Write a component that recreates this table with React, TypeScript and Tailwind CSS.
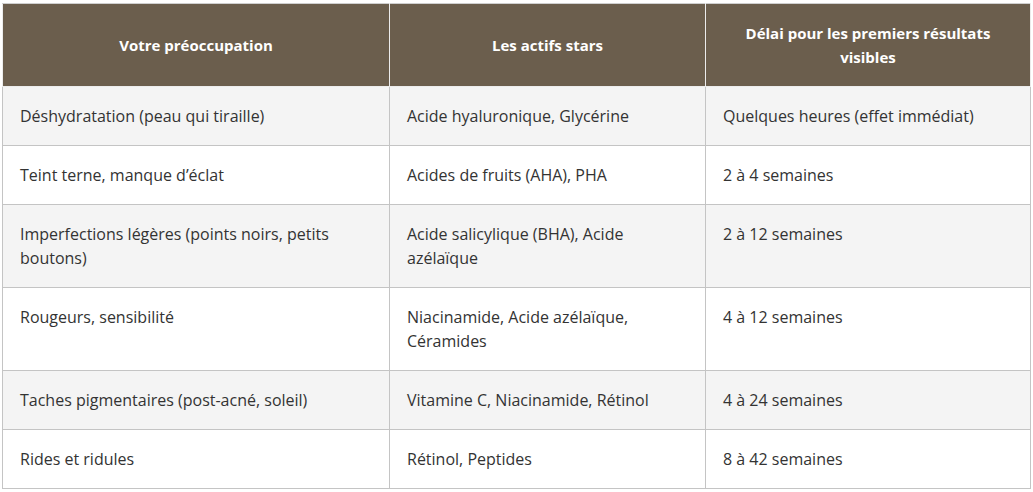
import React from "react";

const rows: [string, string, string][] = [
  ["Déshydratation (peau qui tiraille)", "Acide hyaluronique, Glycérine", "Quelques heures (effet immédiat)"],
  ["Teint terne, manque d’éclat", "Acides de fruits (AHA), PHA", "2 à 4 semaines"],
  ["Imperfections légères (points noirs, petits boutons)", "Acide salicylique (BHA), Acide azélaïque", "2 à 12 semaines"],
  ["Rougeurs, sensibilité", "Niacinamide, Acide azélaïque, Céramides", "4 à 12 semaines"],
  ["Taches pigmentaires (post-acné, soleil)", "Vitamine C, Niacinamide, Rétinol", "4 à 24 semaines"],
  ["Rides et ridules", "Rétinol, Peptides", "8 à 42 semaines"],
];

export default function App() {
  return (
    <div className="bg-white w-[1033px] h-[492px] pl-[2px] pt-[3px] font-['Open_Sans',sans-serif]">
      <table className="w-[1028px] border-collapse table-fixed text-[16px] leading-[24px] text-[#333]">
        <colgroup>
          <col className="w-[387px]" />
          <col className="w-[316px]" />
          <col className="w-[325px]" />
        </colgroup>
        <thead>
          <tr className="bg-[#6b5e4d] text-white h-[83px] text-[15px]">
            <th className="border border-[#ececec] border-t-[#cfcfcf] px-[30px] py-[16px] font-bold leading-[24px] align-middle">
              Votre préoccupation
            </th>
            <th className="border border-[#ececec] border-t-[#cfcfcf] px-[30px] py-[16px] font-bold leading-[24px] align-middle">
              Les actifs stars
            </th>
            <th className="border border-[#ececec] border-t-[#cfcfcf] px-[30px] py-[16px] font-bold leading-[24px] align-middle">
              Délai pour les premiers résultats visibles
            </th>
          </tr>
        </thead>
        <tbody>
          {rows.map((r, i) => (
            <tr key={i} className={i % 2 === 0 ? "bg-[#f4f4f4]" : "bg-white"}>
              {r.map((c, j) => (
                <td key={j} className="border border-[#c4c4c4] px-[17px] py-[17px] align-top">
                  {c}
                </td>
              ))}
            </tr>
          ))}
        </tbody>
      </table>
    </div>
  );
}
